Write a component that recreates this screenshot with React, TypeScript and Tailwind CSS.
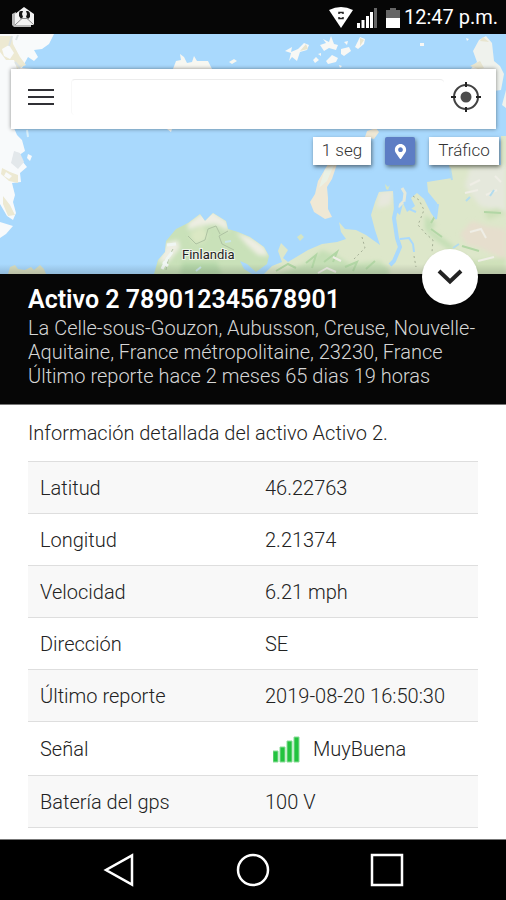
import React from "react";
import { FaMapMarkerAlt } from "react-icons/fa";

interface DetailRow {
  label: string;
  value: string;
  signal?: boolean;
}

const details: DetailRow[] = [
  { label: "Latitud", value: "46.22763" },
  { label: "Longitud", value: "2.21374" },
  { label: "Velocidad", value: "6.21 mph" },
  { label: "Dirección", value: "SE" },
  { label: "Último reporte", value: "2019-08-20 16:50:30" },
  { label: "Señal", value: "MuyBuena", signal: true },
  { label: "Batería del gps", value: "100 V" },
];

const StatusBar: React.FC = () => (
  <header className="flex h-[34px] items-center justify-between bg-[#060606] pl-[11px] pr-2 text-white">
    <svg width="24" height="22" viewBox="0 0 24 22" aria-hidden="true">
      <path d="M1 8 L5 6 V18 H20 V21 H3 L1 19Z" fill="#b9b9b9" />
      <path d="M4 8 L13 1 L23 8 V19 H4Z" fill="#f2f2f2" />
      <path d="M8 10 V7 Q8 5 10 5 H12 L11 8 L12 11 L10 13Z M15 5 H17 Q19 6 19 8 V11 L17 13 L15 11 L16 8Z" fill="#161616" />
      <path d="M4 19 L11 12.500 H16 L23 19" fill="none" stroke="#8c8c8c" strokeWidth="1" />
    </svg>
    <div className="flex items-center">
      <svg width="74" height="22" viewBox="0 0 74 22" aria-hidden="true">
        <path d="M3 4 Q15 -2 27 4 L15 22Z" fill="#fff" />
        <path d="M13 8 V6.500 H17 V8 M13 11 V12.500 H17 V11" fill="none" stroke="#222" strokeWidth="1.500" />
        <path d="M31 17h3v5h-3z M35.500 14h3v8h-3z M40 10h3v12h-3z M44 6h3v16h-3z" fill="#fff" />
        <path d="M48 2h3v20h-3z" fill="#666" />
        <path d="M60 4 H64 V2 H70 V4 H74 V12 H60Z" fill="#666" />
        <path d="M60 12 H74 V22 H60Z" fill="#fff" />
      </svg>
      <time className="pl-1 text-[20px] leading-6">12:47 p.m.</time>
    </div>
  </header>
);

const MapBackground: React.FC = () => (
  <svg
    className="absolute inset-0 h-full w-full"
    viewBox="0 34 506 240"
    preserveAspectRatio="xMidYMid slice"
    aria-hidden="true"
  >
    <defs>
      <linearGradient id="mapShade" x1="0" y1="0" x2="0" y2="1">
        <stop offset="0" stopColor="#000" stopOpacity="0" />
        <stop offset="1" stopColor="#000" stopOpacity="0.14" />
      </linearGradient>
      <filter id="soft">
        <feGaussianBlur stdDeviation="2" />
      </filter>
      <filter id="fine">
        <feGaussianBlur stdDeviation="0.7" />
      </filter>
      <clipPath id="siberia">
        <path d="M506 136 H501 V165 H449 L452 178 L427 182 L428 192 L437 203 L436 220 L431 213 L424 199 L417 193 L411 198 L415 206 L407 212 L403 203 L400 215 L394 210 L393 191 L379 192 L375 202 L371 215 L375 230 L380 245 L366 235 L356 230 L345 229 L339 222 L341 232 L346 239 L337 242 L322 244 L308 250 L298 256 L288 262 L283 258 L288 250 L281 243 L278 251 L282 262 L272 266 L264 274 H506Z" />
      </clipPath>
      <clipPath id="nordic">
        <path d="M154 274 L158 260 L165 252 L166 241 L176 229 L188 223 L200 214 L205 221 L213 213 L226 221 L228 229 L238 232 L250 237 L264 247 L269 256 L267 264 L256 272 L247 264 L240 261 L244 269 L252 274Z" />
      </clipPath>
    </defs>
    <path d="M0 34H506V274H0Z" fill="#a9d9fd" />

    {/* Groenlandia */}
    <path d="M0 34 H54 L49 44 L42 49 L34 50 L38 57 L34 61 L28 57 L22 68 L34 69 L26 73 L14 75 V128 L17 135 L22 140 L25 151 L18 156 L27 167 L20 173 L21 182 L12 183 L15 195 L13 202 L16 213 L13 220 L7 216 L0 204Z M0 222 L13 226 L6 234 L0 238Z M28 154 L32 156 L30 161 L27 158Z" fill="#f8fafb" />
    <g filter="url(#fine)">
      <path d="M0 36 L12 36 L13 44 L20 57 L26 65 L17 69 L14 60 L6 60 L0 52Z M2 168 L10 172 L18 175 L18 183 L9 181 L1 174Z M3 196 L10 205 L15 215 L8 216 L3 204Z" fill="#ede9d2" />
      <path d="M2 49 L9 45 L14 53 L10 59 L4 56Z M6 172 L12 176 L9 179 L4 176Z" fill="#f8fafb" />
      <path d="M14 151 L20 153 L24 162 L18 169 L11 163Z" fill="#e3e8eb" />
      <path d="M12 36 L9 46 M16 40 L18 35 M15 62 L20 68" fill="none" stroke="#dce3e5" strokeWidth="2" />
    </g>
    <path d="M27 130 L28 137" stroke="#d9f0fb" strokeWidth="2" />

    {/* islas del ártico */}
    <path d="M173 69 L176 61 L181 60 L180 54 L184 57 L187 63 L192 62 L194 56 L197 61 L208 61 L212 69Z M229 62 L234 59 L237 61 L232 64Z M167 129 H172 L171 132Z" fill="#f7f7f1" />
    <path d="M285 51 L292 47 L291 52 L298 49 L304 43 L309 45 L307 50 L300 52 L297 61 L292 57 L289 61 L291 53Z M320 45 L326 43 L323 39 L329 42 L331 36 L334 44 L338 45 L336 50 L329 48 L324 51Z M341 49 L349 47 L351 51 L344 56 L341 54Z M344 42 L348 41 L347 45Z M355 47 L360 37 L365 39 L364 44 L358 49Z M326 61 L332 55 L338 58 L336 62 L328 64Z M313 60 L316 57 L319 60 L315 63Z M318 54 L321 53 L321 56Z M420 43 L424 43 L424 46 L420 46Z M466 38 L469 39 L467 41Z M339 65 L342 66 L340 68Z" fill="#f8f8f5" />
    <path d="M473 51 L479 40 L486 36 L492 43 L494 61 L500 66 L504 74 L501 90 L494 91 V69 L470 70 L477 62Z M506 90 L502 105 L506 108Z" fill="#eff2ed" />
    <path d="M483 37 L489 42 L480 41Z M470 66 L480 61 L484 68 L478 69Z M300 51 L306 44 L308 49Z M360 38 L364 40 L360 46Z" fill="#e8e5cf" />

    {/* Nueva Zembla */}
    <path d="M365 137 L367 131 L376 128 L379 132 L374 139Z M328 164 L337 164 L332 179 L327 187 L328 198 L328 209 L332 217 L325 219 L314 212 L310 202 L315 194 L318 181 L324 171Z" fill="#efe8d5" />
    <path d="M325 169 L334 165 L327 181 L319 188Z" fill="#eaf1e5" />

    <g clipPath="url(#siberia)">
      <path d="M260 130H506V280H260Z" fill="#dde7ca" />
      <g filter="url(#soft)">
        <path d="M284 272 L308 262 L322 250 L337 256 L350 264 L379 261 L389 268 V280 H260Z M425 215 L436 224 L431 230 L443 238 L456 248 L449 250 L433 238 L425 229Z" fill="#c5dfb6" />
        <path d="M460 234 L472 221 L487 226 L506 229 V260 L480 248 L467 245Z" fill="#e6decd" />
        <path d="M470 168 L506 165 V212 L480 206 L465 186Z" fill="#e5e8dc" />
        <path d="M484 212 L497 208 L506 213 L488 220Z M440 262 L506 258 V274 H440Z" fill="#cfe1ba" />
        <path d="M379 192 L394 190 L390 205 L377 208Z" fill="#e7e8dd" />
      </g>
      <g filter="url(#fine)" fill="none">
        <path d="M276 271 L288 264 L296 268 M306 263 L316 255 L312 268 M324 262 L337 252 L333 262 M345 267 L357 262 L353 271 M366 269 L375 261 M435 216 L431 223 M431 229 L442 237 M484 212 L501 213 M462 246 L479 251" stroke="#b2d6a5" strokeWidth="2" />
        <path d="M318 273 L327 268 L336 272 M333 257 L341 261 M470 185 L480 180 M465 193 L478 190 M495 176 L501 182 M486 195 L497 190 M470 232 L481 229 L486 238 M478 261 L494 257" stroke="#efeee6" strokeWidth="2" />
      </g>
    </g>
    <path d="M386 189 L385 184 L388 187 L390 185 L388 190Z M297 237 L301 234 L304 237 L300 241Z" fill="#d5e5c4" />
    <path d="M402 188 L405 193 L404 201 L398 207" stroke="#e6e9da" strokeWidth="3" fill="none" />
    <path d="M396 188 L397 204 L394 218 L397 238 L400 247 L397 254 L394 261 L390 265" stroke="#a9d9fd" strokeWidth="4" strokeLinejoin="round" fill="none" />
    <path d="M400 239 L409 238 L413 244 L414 252 M404 202 L409 209 L416 212 M438 204 L436 219" stroke="#a9d9fd" strokeWidth="2" fill="none" />
    <path d="M450 168 L452 180 M466 201 L470 197 M490 196 L494 190 M453 248 L459 244 M480 159 L478 164" stroke="#b3dcee" strokeWidth="2" fill="none" />
    <path d="M413 196 L419 200 L424 210 L418 225 L426 234 L433 240 L432 252 M362 237 L365 248 L354 259 M414 256 L416 267" stroke="#a5b096" strokeDasharray="2 3" fill="none" />

    <g clipPath="url(#nordic)">
      <path d="M150 210H275V280H150Z" fill="#c9e1b9" />
      <g filter="url(#soft)">
        <path d="M188 223 L200 214 L213 211 L228 222 L229 231 L215 224 L200 226 L188 230Z M166 243 L178 240 L180 248 L168 262 L158 262Z M236 232 L250 237 L264 246 L269 256 L258 255 L246 244Z" fill="#eeeee3" />
        <path d="M190 233 L203 226 L208 236 L202 243 L193 242Z" fill="#dbe8c4" />
        <path d="M182 262 H217 L222 276 H180Z" fill="#b6d8aa" />
      </g>
      <path d="M188 236 L196 244 L205 240 L208 229 L216 226 L220 234 M234 250 L222 244 L219 236 L228 231 M166 270 L169 256 L173 249" stroke="#aec2a2" fill="none" />
      <path d="M162 269 L167 259 L172 252 M167 245 L176 244 M163 262 L168 266" stroke="#f0f6f3" strokeWidth="3" fill="none" />
      <path d="M225 242 L231 241 M196 271 L201 267" stroke="#c9e5e8" strokeWidth="2" fill="none" />
    </g>
    <path d="M8 274 L10 267 L15 265 L18 269 L25 270 L31 267 L34 270 L40 265 L44 269 L46 274Z" fill="#d7ddbf" />
    <path d="M0 264H506V274H0Z" fill="url(#mapShade)" />
    <text
      x="182"
      y="259"
      className="font-['Roboto',sans-serif] text-[13px]"
      fill="#222"
      stroke="#eef4e9"
      strokeWidth="2"
      paintOrder="stroke"
    >
      Finlandia
    </text>
  </svg>
);

const SearchCard: React.FC = () => (
  <div className="flex h-[60px] items-center bg-white px-3 pb-1 shadow-[0_0_4px_rgba(0,0,0,0.45)]">
    <button type="button" aria-label="Menú" className="flex h-10 w-9 items-center justify-center">
      <svg width="26" height="18" viewBox="0 0 26 18" aria-hidden="true">
        <path d="M0 2H26M0 9H26M0 16H26" stroke="#303035" strokeWidth="2" />
      </svg>
    </button>
    <input
      type="text"
      aria-label="Buscar"
      className="ml-3 h-9 min-w-0 flex-1 rounded border-t border-l border-t-[#ececec] border-l-[#f8f8f8] bg-white px-3 text-[18px] text-[#333] outline-none"
    />
    <button type="button" aria-label="Mi ubicación" className="ml-1 flex h-10 w-9 items-center justify-center">
      <svg width="32" height="32" viewBox="0 0 32 32" fill="none" stroke="#424242" strokeWidth="2" aria-hidden="true">
        <circle cx="16" cy="16" r="12" />
        <circle cx="16" cy="16" r="5.500" fill="#4d4d4d" stroke="none" />
        <path d="M16 1V6M16 26V31M1 16H6M26 16H31" stroke="#222" />
      </svg>
    </button>
  </div>
);

const MapSection: React.FC = () => (
  <section className="relative h-60 shrink-0">
    <MapBackground />
    <div className="relative pt-[35px] pr-[10px] pl-[11px]">
      <SearchCard />
    </div>
    <div className="relative mt-2 flex justify-end gap-[14px] pr-[7px] text-[17px] leading-6 text-[#333]">
      <button type="button" className="h-7 w-[58px] bg-white pb-[2px] font-light shadow-[1px_2px_4px_rgba(0,0,0,0.5)]">
        1 seg
      </button>
      <button
        type="button"
        aria-label="Ver ubicación"
        className="flex h-7 w-[30px] items-center justify-center rounded-xs bg-[#5d7dc4] text-white shadow-[1px_2px_4px_rgba(0,0,0,0.5)]"
      >
        <FaMapMarkerAlt size={15} />
      </button>
      <button type="button" className="h-7 w-[70px] bg-white pb-[2px] font-light shadow-[1px_2px_4px_rgba(0,0,0,0.5)]">
        Tráfico
      </button>
    </div>
  </section>
);

const AssetSummary: React.FC = () => (
  <section className="relative bg-[#060606] px-7 pt-3 pb-4">
    <h1 className="text-[25px] leading-7 font-semibold text-white">Activo 2 789012345678901</h1>
    <p className="pt-[2px] text-[20px] leading-6 font-light text-[#d6d6d6]">
      La Celle-sous-Gouzon, Aubusson, Creuse, Nouvelle-<wbr />Aquitaine, France métropolitaine, 23230, France
    </p>
    <p className="text-[20px] leading-6 font-light text-[#d6d6d6]">Último reporte hace 2 meses 65 dias 19 horas</p>
    <button
      type="button"
      aria-label="Ocultar detalles"
      className="absolute -top-[25px] right-7 flex size-14 items-center justify-center rounded-full bg-white shadow"
    >
      <svg width="28" height="18" viewBox="0 0 28 18" fill="none" aria-hidden="true">
        <path d="M3 3L14 13.500L25 3" stroke="#222" strokeWidth="4" />
      </svg>
    </button>
  </section>
);

const SignalBars: React.FC = () => (
  <svg className="mr-3 ml-2" width="28" height="28" viewBox="0 0 28 28" aria-hidden="true">
    <path d="M0 16h5v11h-5z M7 12h5v15h-5z M14 6h5v21h-5z M21 2h5v25h-5z" fill="#22c33f" stroke="#8bdc99" strokeWidth="1" />
  </svg>
);

const AssetDetails: React.FC = () => (
  <main className="flex-1 border-t border-[#777] bg-white px-7 pt-4 pb-[9px]">
    <p className="text-[20px] leading-6 font-light text-[#222]">Información detallada del activo Activo 2.</p>
    <table className="mt-4 w-full table-fixed border-collapse text-left text-[20px] leading-6 font-light text-[#222]">
      <tbody>
        {details.map((row) => (
          <tr key={row.label} className="h-[52px] border-y border-[#dedede] odd:bg-[#f8f8f8]">
            <th scope="row" className="px-3 font-light">
              {row.label}
            </th>
            <td className="px-3">
              {row.signal ? (
                <div className="flex h-[53px] items-center">
                  <SignalBars />
                  <span>{row.value}</span>
                </div>
              ) : (
                row.value
              )}
            </td>
          </tr>
        ))}
      </tbody>
    </table>
  </main>
);

const NavigationBar: React.FC = () => (
  <nav className="flex h-[61px] items-center justify-center gap-[98px] border-t border-[#777] bg-black">
    <button type="button" aria-label="Atrás">
      <svg width="36" height="36" viewBox="0 0 36 36" fill="none" stroke="#fff" strokeWidth="2.500" aria-hidden="true">
        <path d="M31 3.500V32.500L5 18Z" />
      </svg>
    </button>
    <button type="button" aria-label="Inicio">
      <svg width="36" height="36" viewBox="0 0 36 36" fill="none" stroke="#fff" strokeWidth="2.500" aria-hidden="true">
        <circle cx="18" cy="18" r="15" />
      </svg>
    </button>
    <button type="button" aria-label="Recientes">
      <svg width="36" height="36" viewBox="0 0 36 36" fill="none" stroke="#fff" strokeWidth="2.500" aria-hidden="true">
        <path d="M3 3H33V33H3Z" />
      </svg>
    </button>
  </nav>
);

const App: React.FC = () => {
  return (
    <div className="flex min-h-screen flex-col bg-white font-['Roboto',sans-serif]">
      <StatusBar />
      <MapSection />
      <AssetSummary />
      <AssetDetails />
      <NavigationBar />
    </div>
  );
};

export default App;
